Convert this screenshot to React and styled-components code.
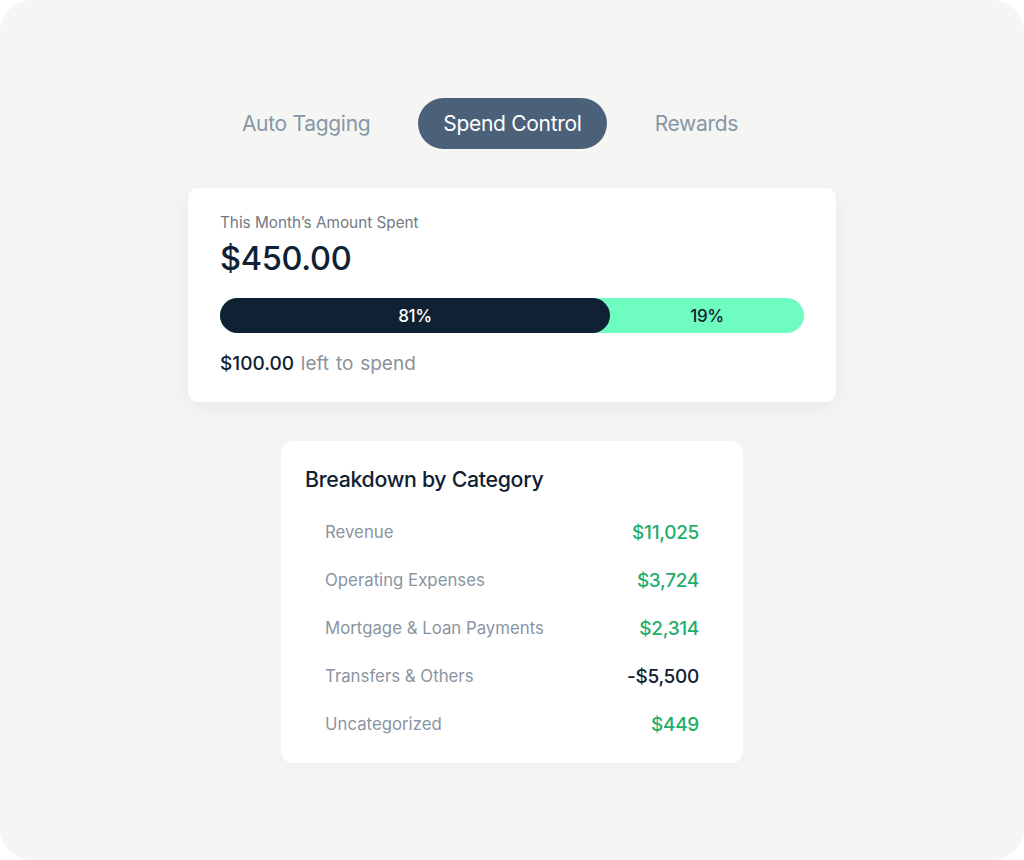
import styled, { createGlobalStyle } from "styled-components";

const GlobalStyle = createGlobalStyle`
  html, body {
    margin: 0;
    padding: 0;
    background: #ffffff;
  }
  body {
    font-family: Inter, "Noto Sans", sans-serif;
    -webkit-font-smoothing: antialiased;
  }
`;

const tabs = ["Auto Tagging", "Spend Control", "Rewards"];

const categories = [
  { label: "Revenue", value: "$11,025", positive: true },
  { label: "Operating Expenses", value: "$3,724", positive: true },
  { label: "Mortgage & Loan Payments", value: "$2,314", positive: true },
  { label: "Transfers & Others", value: "-$5,500", positive: false },
  { label: "Uncategorized", value: "$449", positive: true },
];

const App = () => {
  return (
    <>
      <GlobalStyle />
      <Panel>
        <TabBar>
          {tabs.map((t) => (
            <Tab key={t} $active={t === "Spend Control"}>
              {t}
            </Tab>
          ))}
        </TabBar>

        <SpendCard>
          <Label>This Month’s Amount Spent</Label>
          <Amount>$450.00</Amount>
          <Bar>
            <Segment $dark style={{ width: "390px" }}>81%</Segment>
            <Segment>19%</Segment>
          </Bar>
          <Remaining>
            <strong>$100.00</strong> left to spend
          </Remaining>
        </SpendCard>

        <BreakdownCard>
          <CardTitle>Breakdown by Category</CardTitle>
          <Rows>
            {categories.map((c) => (
              <Row key={c.label}>
                <RowLabel>{c.label}</RowLabel>
                <RowValue $positive={c.positive}>{c.value}</RowValue>
              </Row>
            ))}
          </Rows>
        </BreakdownCard>
      </Panel>
    </>
  );
};

const Panel = styled.div`
  width: 1024px;
  height: 860px;
  box-sizing: border-box;
  border-radius: 32px;
  background: #f5f5f3;
  display: flex;
  flex-direction: column;
  align-items: center;
  padding-top: 98px;
`;

const TabBar = styled.div`
  display: flex;
  gap: 22px;
  margin-right: 44px;
`;

const Tab = styled.div`
  height: 51px;
  padding: 0 25.5px;
  border-radius: 26px;
  display: flex;
  align-items: center;
  font-size: 21px;
  letter-spacing: -0.3px;
  color: ${(p) => (p.$active ? "#ffffff" : "#8797a6")};
  background: ${(p) => (p.$active ? "#4b6179" : "transparent")};
`;

const SpendCard = styled.div`
  margin-top: 39px;
  width: 648px;
  height: 214px;
  box-sizing: border-box;
  padding: 25px 32px 0;
  background: #ffffff;
  border-radius: 10px;
  box-shadow: 0 6px 24px rgba(20, 30, 40, 0.06);
`;

const Label = styled.div`
  font-size: 15.3px;
  color: #737a84;
`;

const Amount = styled.div`
  margin-top: 7px;
  font-size: 32.5px;
  font-weight: 500;
  color: #0f2133;
  letter-spacing: -0.3px;
`;

const Bar = styled.div`
  margin-top: 20px;
  height: 35px;
  border-radius: 18px;
  overflow: hidden;
  display: flex;
  background: #6ffcc0;
`;

const Segment = styled.div`
  flex: ${(p) => (p.$dark ? "none" : "1")};
  display: flex;
  align-items: center;
  justify-content: center;
  font-size: 17px;
  font-weight: 500;
  color: ${(p) => (p.$dark ? "#ffffff" : "#0f2133")};
  background: ${(p) => (p.$dark ? "#0f2133" : "transparent")};
  border-radius: ${(p) => (p.$dark ? "0 18px 18px 0" : "0")};
  letter-spacing: -0.3px;
`;

const Remaining = styled.div`
  margin-top: 19px;
  font-size: 19px;
  color: #8c9199;
  word-spacing: 1.5px;

  strong {
    font-weight: 500;
    color: #0f2133;
  }
`;

const BreakdownCard = styled.div`
  margin-top: 39px;
  width: 462px;
  height: 322px;
  box-sizing: border-box;
  padding: 25px 24px 0;
  background: #ffffff;
  border-radius: 12px;
  box-shadow: 0 4px 20px rgba(20, 30, 40, 0.03);
`;

const CardTitle = styled.div`
  font-size: 21.3px;
  font-weight: 500;
  color: #0f2133;
  letter-spacing: -0.3px;
`;

const Rows = styled.div`
  margin-top: 16px;
  padding: 0 20px;
  display: flex;
  flex-direction: column;
`;

const Row = styled.div`
  height: 48px;
  display: flex;
  align-items: center;
  justify-content: space-between;
`;

const RowLabel = styled.div`
  font-size: 16.8px;
  color: #8a95a2;
`;

const RowValue = styled.div`
  font-size: 19px;
  font-weight: 500;
  letter-spacing: -0.3px;
  color: ${(p) => (p.$positive ? "#1fae6b" : "#0f2133")};
`;

export default App;
